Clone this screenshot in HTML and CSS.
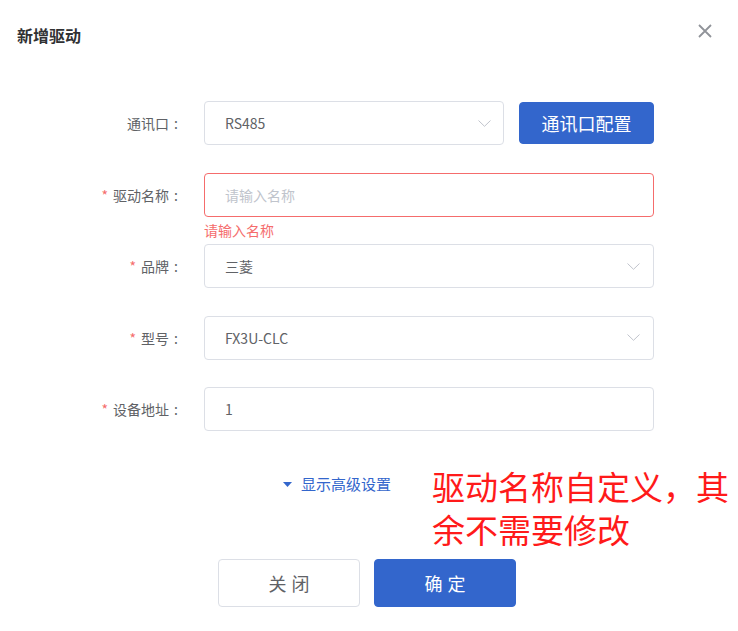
FILE: index.html
```html
<!DOCTYPE html>
<html lang="zh-CN">
<head>
<meta charset="utf-8">
<title>新增驱动</title>
<link rel="stylesheet" href="styles.css">
</head>
<body>
<div class="dialog">
  <div class="header">
    <span class="title">新增驱动</span>
    <svg class="close" width="14" height="14" viewBox="0 0 14 14"><path d="M1 1L13 13M13 1L1 13" stroke="#909399" stroke-width="1.8" fill="none"/></svg>
  </div>
  <div class="form">
    <div class="row">
      <label class="label">通讯口<span class="colon">:</span></label>
      <div class="control">
        <div class="field select short"><span class="value">RS485</span>
          <svg class="chev" width="13" height="7" viewBox="0 0 13 7"><path d="M0.5 0.5L6.5 6.3L12.5 0.5" stroke="#c0c4cc" stroke-width="1" fill="none"/></svg>
        </div>
        <button class="btn primary cfg">通讯口配置</button>
      </div>
    </div>
    <div class="row">
      <label class="label"><span class="req">*</span>驱动名称<span class="colon">:</span></label>
      <div class="control col">
        <div class="field error"><span class="placeholder">请输入名称</span></div>
        <div class="err-msg">请输入名称</div>
      </div>
    </div>
    <div class="row">
      <label class="label"><span class="req">*</span>品牌<span class="colon">:</span></label>
      <div class="control">
        <div class="field select"><span class="value">三菱</span>
          <svg class="chev" width="13" height="7" viewBox="0 0 13 7"><path d="M0.5 0.5L6.5 6.3L12.5 0.5" stroke="#c0c4cc" stroke-width="1" fill="none"/></svg>
        </div>
      </div>
    </div>
    <div class="row">
      <label class="label"><span class="req">*</span>型号<span class="colon">:</span></label>
      <div class="control">
        <div class="field select"><span class="value">FX3U-CLC</span>
          <svg class="chev" width="13" height="7" viewBox="0 0 13 7"><path d="M0.5 0.5L6.5 6.3L12.5 0.5" stroke="#c0c4cc" stroke-width="1" fill="none"/></svg>
        </div>
      </div>
    </div>
    <div class="row">
      <label class="label"><span class="req">*</span>设备地址<span class="colon">:</span></label>
      <div class="control">
        <div class="field"><span class="value">1</span></div>
      </div>
    </div>
  </div>
  <div class="adv">
    <svg class="tri" width="9" height="5" viewBox="0 0 9 5"><path d="M0 0H9L4.5 5Z" fill="#3366cc"/></svg>
    <span>显示高级设置</span>
  </div>
  <div class="footer">
    <button class="btn plain">关闭</button>
    <button class="btn primary ok">确定</button>
  </div>
  <div class="note">驱动名称自定义，其<br>余不需要修改</div>
</div>
</body>
</html>
```

FILE: styles.css
```css
* { box-sizing: border-box; }
html, body { margin: 0; padding: 0; background: #fff; }
body {
  font-family: "Noto Sans CJK SC", "Noto Sans", "Liberation Sans", sans-serif;
  color: #606266;
  width: 738px;
  height: 631px;
  overflow: hidden;
}
.dialog { position: relative; width: 738px; height: 631px; }
.header {
  display: flex;
  justify-content: space-between;
  align-items: center;
  padding: 25px 26px 0 17px;
  height: 45px;
}
.title { font-size: 16px; font-weight: 700; color: #303133; line-height: 20px; }
.close { margin-top: -9px; }
.form { padding-top: 56px; }
.row { display: flex; align-items: flex-start; margin-bottom: 27.5px; height: 44px; }
.label {
  width: 180px;
  padding-right: 2px;
  text-align: right;
  font-size: 14px;
  line-height: 44px;
  color: #606266;
  flex: none;
}
.colon { margin-left: 5px; }
.req { color: #f56c6c; margin-right: 5px; }
.control { margin-left: 24px; display: flex; width: 450px; }
.control.col { flex-direction: column; }
.field {
  width: 450px;
  height: 44px;
  border: 1px solid #dcdfe6;
  border-radius: 4px;
  display: flex;
  align-items: center;
  justify-content: space-between;
  padding: 0 13px 0 20px;
  font-size: 14px;
}
.field.short { width: 300px; padding-right: 12px; }
.field.error { border-color: #f56c6c; }
.value { color: #606266; }
.placeholder { color: #c0c4cc; }
.chev { flex: none; }
.err-msg { color: #f56c6c; font-size: 14px; line-height: 14px; margin-top: 6px; }
.btn {
  font-family: inherit;
  border-radius: 4px;
  cursor: pointer;
}
.primary { background: #3366cc; border: 1px solid #3366cc; color: #fff; }
.cfg { margin-left: 15px; width: 135px; height: 42px; margin-top: 1px; font-size: 18px; padding: 0; }
.adv {
  display: flex;
  align-items: center;
  padding-left: 283px;
  margin-top: 43px;
  color: #3366cc;
  font-size: 15px;
  line-height: 20px;
}
.tri { margin-right: 9px; }
.footer { display: flex; gap: 14px; padding-left: 218px; margin-top: 65px; }
.footer .btn { width: 142px; height: 48px; font-size: 18px; letter-spacing: 5px; padding: 0 0 0 5px; }
.plain { background: #fff; border: 1px solid #dcdfe6; color: #606266; }
.note {
  position: absolute;
  left: 432px;
  top: 465px;
  font-size: 33px;
  line-height: 43px;
  color: #ff1a1a;
  white-space: nowrap;
}
```
